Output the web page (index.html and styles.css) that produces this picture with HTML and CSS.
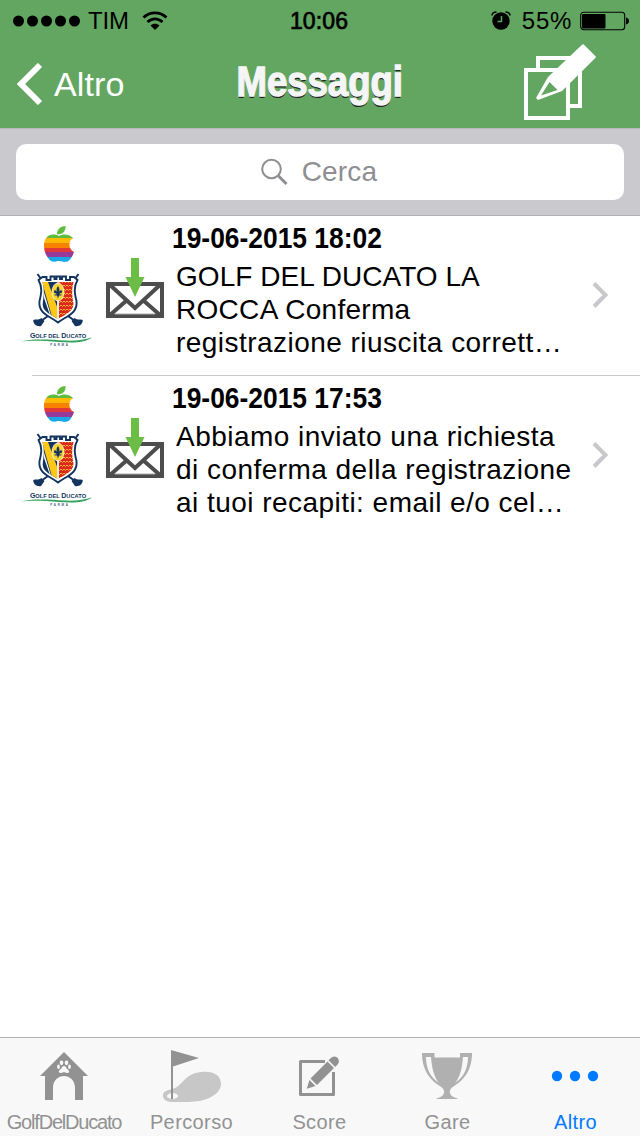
FILE: index.html
```html
<!DOCTYPE html>
<html lang="it">
<head>
    <meta charset="UTF-8">
    <meta name="viewport" content="width=device-width, initial-scale=1.0">
    <title>Messaggi</title>
    <link rel="stylesheet" href="styles.css">
</head>
<body>
    <!-- Shared icons -->
    <svg class="defs" width="0" height="0">
        <defs>
            <clipPath id="appleShape">
                <path d="M41 18.500 C41 14 44 10 49.500 10 C50 15 47 18.500 41 18.500 Z"/>
                <path d="M43 20 C47 17.500 53 18 57 22 C52 25 52 33 58 36 C56 42 53 46 49 46 C46 46 44 44.500 42 45 C39 46 37 46 35 45 C31 42 28 36 28 30 C28 21 34 16 43 20 Z"/>
            </clipPath>
            <clipPath id="shieldShape">
                <path d="M26.500 66 H57.500 C55.500 73 56 80 57.500 88 C57 96 49 98.500 42 103 C35 98.500 27 96 26.500 88 C28 80 28.500 73 26.500 66 Z"/>
            </clipPath>
            <pattern id="scales" width="3" height="4" patternUnits="userSpaceOnUse">
                <rect width="3" height="4" fill="#d9281c"/>
                <path d="M0 1 L1.500 2.500 L3 1" fill="none" stroke="#ffb52c" stroke-width="1"/>
            </pattern>
        </defs>
        <symbol id="club" viewBox="0 0 80 144">
            <g clip-path="url(#appleShape)" shape-rendering="crispEdges">
                <rect x="26" y="9" width="34" height="14" fill="#5ebd3e"/>
                <rect x="26" y="22" width="34" height="6" fill="#ffb900"/>
                <rect x="26" y="27" width="34" height="5" fill="#f78200"/>
                <rect x="26" y="32" width="34" height="4" fill="#e23838"/>
                <rect x="26" y="36" width="34" height="5" fill="#973999"/>
                <rect x="26" y="41" width="34" height="5" fill="#1aa7e8"/>
            </g>
            <path d="M21.500 58 L26.500 65 M62.500 58 L57.500 65 M32 100 L25 105 M52 100 L59 105" fill="none" stroke="#12345f" stroke-width="2"/>
            <path d="M17.300 104 C20 103 22 104.500 25.500 102 L28.500 105 L25 110 C21 111 17 108 17.300 104 Z M66.700 104 C64 103 62 104.500 58.500 102 L55.500 105 L59 110 C63 111 67 108 66.700 104 Z" fill="#12345f"/>
            <path d="M22.500 64 L26.500 61 H30.500 V64 H34.500 V60.500 H38.500 V63 H40.500 V60.500 H44 V63 H46 V60.500 H50 V64 H54 V61 H58 L61.500 64 C57.500 71 58.500 77 60.500 85 C62 98 50 100 42 106.500 C34 100 22 98 23.500 85 C25.500 77 26.500 71 22.500 64 Z" fill="#fff" stroke="#12345f" stroke-width="1.900"/>
            <g clip-path="url(#shieldShape)">
                <rect x="25" y="62" width="16.500" height="44" fill="#12345f"/>
                <path d="M26 70 L36 103 H26 Z" fill="#fff"/>
                <path d="M27 79 L35 102 H27 Z" fill="#12345f"/>
                <path d="M26 66 H32 L41.500 92 V104 H37 Z" fill="#ffc814"/>
                <rect x="42.500" y="66" width="17" height="38" fill="url(#scales)"/>
                <path d="M42 83 V105" stroke="#fff" stroke-width="1.500"/>
            </g>
            <ellipse cx="42" cy="76" rx="6" ry="9" fill="#ffd32d" stroke="#fff" stroke-width=".8"/>
            <path d="M42 70 C39.500 73.500 41 74.500 41.200 76.500 C40.500 73.500 37.500 73.500 38 76 C38.200 77.500 39.500 77.500 40 77 L40.500 78.500 H38.500 V79.500 H41 L42 82.500 L43 79.500 H45.500 V78.500 H43.500 L44 77 C44.500 77.500 45.800 77.500 46 76 C46.500 73.500 43.500 73.500 42.800 76.500 C43 74.500 44.500 73.500 42 70 Z" fill="#12345f"/>
            <path d="M4.500 126 C15 122 36 124 48 124.500 C60 125 68 124 76 121.500 C66 128 54 126.500 43 126 C28 125 14 124 4.500 126 Z" fill="#33a05a"/>
        </symbol>
        <symbol id="inbox" viewBox="0 0 58 60">
            <path d="M2 26 H56 V58 H2 Z" fill="#fff" stroke="#4d4d4d" stroke-width="4"/>
            <path d="M4 57 L20 43 M54 57 L38 43 M3 26 L29 50 L55 26" fill="none" stroke="#4d4d4d" stroke-width="4"/>
            <path d="M9 56 H49" stroke="#aaa" stroke-width="1"/>
            <path d="M25 0 H33 V19 H38.500 L29 39 L19.500 19 H25 Z" fill="#6cbd45"/>
        </symbol>
    </svg>

    <div class="screen">
        <header class="top">
            <div class="status-bar">
                <div class="status-left">
                    <svg width="68" height="12" viewBox="0 0 68 12"><circle cx="5.500" cy="6" r="5.500"/><circle cx="19.500" cy="6" r="5.500"/><circle cx="33.500" cy="6" r="5.500"/><circle cx="47.500" cy="6" r="5.500"/><circle cx="61.500" cy="6" r="5.500"/></svg>
                    <span class="carrier">TIM</span>
                    <svg class="wifi" width="26" height="20" viewBox="0 0 26 20">
                        <path d="M1.500 6.500 C8 .3 18 .3 24.500 6.500 M5.500 11 C10 6.700 16 6.700 20.500 11" fill="none" stroke="#000" stroke-width="2.800"/>
                        <path d="M8.500 14.500 C11 12 15 12 17.500 14.500 L13 19 Z"/>
                    </svg>
                </div>
                <span class="clock">10:06</span>
                <div class="status-right">
                    <svg width="20" height="19" viewBox="0 0 20 19">
                        <circle cx="10" cy="10" r="8.700"/>
                        <path d="M1 4.500 C1 2 3 1 5.500 1 M19 4.500 C19 2 17 1 14.500 1" fill="none" stroke="#000" stroke-width="1.600"/>
                        <path d="M10.500 5 V10.500 H6.500" fill="none" stroke="#62a662" stroke-width="1.500"/>
                    </svg>
                    <span class="percent">55%</span>
                    <svg width="49" height="20" viewBox="0 0 49 20">
                        <rect x=".7" y="1.200" width="44" height="17.600" rx="3" fill="none" stroke="#000" stroke-width="1.100"/>
                        <rect x="2" y="3" width="23.500" height="14.500" rx="1"/>
                        <path d="M46 6.500 C50 7 50 13 46 13.500 Z"/>
                    </svg>
                </div>
            </div>
            <nav class="nav-bar">
                <a class="back">
                    <svg width="26" height="42" viewBox="0 0 26 42"><path d="M23 2 L4 21 L23 40" fill="none" stroke="#fff" stroke-width="6"/></svg>
                    <span>Altro</span>
                </a>
                <h1>Messaggi</h1>
                <svg class="compose" width="73" height="77" viewBox="0 0 73 77">
                    <path d="M14 26 V14 H56 V62 H44" fill="none" stroke="#fff" stroke-width="4"/>
                    <rect x="2" y="26" width="42" height="48" fill="#62a662" stroke="#fff" stroke-width="4"/>
                    <path d="M58 .7 Q59 -.3 60 .7 L71.300 12 Q72.300 13 71.300 14 L38 47 L14 56 L12 54 L24 33 Z" fill="#fff"/>
                    <path d="M25.500 38 L33.500 46 L17 51.500 Z" fill="#62a662"/>
                </svg>
            </nav>
        </header>

        <div class="search-bar">
            <div class="search-field">
                <svg width="27" height="28" viewBox="0 0 27 28"><circle cx="10.500" cy="11" r="9.300" fill="none" stroke="#8e8e93" stroke-width="2"/><path d="M17 17.500 L25.500 26" stroke="#8e8e93" stroke-width="3"/></svg>
                <span>Cerca</span>
            </div>
        </div>

        <main class="messages">
            <article class="message">
                <div class="club-logo">
                    <svg width="80" height="144"><use href="#club"/></svg>
                    <span class="club-name">G<small>OLF DEL </small>D<small>UCATO</small></span>
                    <span class="club-city">PARMA</span>
                </div>
                <svg class="inbox-icon"><use href="#inbox"/></svg>
                <div class="message-body">
                    <h2>19-06-2015 18:02</h2>
                    <p><span class="caps">GOLF DEL DUCATO LA</span><span class="mixed">ROCCA Conferma</span><span>registrazione riuscita corrett…</span></p>
                </div>
                <svg class="chevron" width="16" height="26" viewBox="0 0 16 26"><path d="M2 1.500 L13.500 13 L2 24.500" fill="none" stroke="#c7c7cc" stroke-width="4"/></svg>
            </article>
            <article class="message">
                <div class="club-logo">
                    <svg width="80" height="144"><use href="#club"/></svg>
                    <span class="club-name">G<small>OLF DEL </small>D<small>UCATO</small></span>
                    <span class="club-city">PARMA</span>
                </div>
                <svg class="inbox-icon"><use href="#inbox"/></svg>
                <div class="message-body">
                    <h2>19-06-2015 17:53</h2>
                    <p><span>Abbiamo inviato una richiesta</span><span>di conferma della registrazione</span><span>ai tuoi recapiti: email e/o cel…</span></p>
                </div>
                <svg class="chevron" width="16" height="26" viewBox="0 0 16 26"><path d="M2 1.500 L13.500 13 L2 24.500" fill="none" stroke="#c7c7cc" stroke-width="4"/></svg>
            </article>
        </main>

        <footer class="tab-bar">
            <a class="tab">
                <svg width="64" height="64" viewBox="0 0 64 64">
                    <path d="M32 14 L56 38 H51 V62 H43 V50 C43 34 21 34 21 50 V62 H13 V38 H8 Z" fill="#929292"/>
                    <g fill="#f8f8f8">
                        <ellipse cx="29.500" cy="24.800" rx="1.800" ry="2.400"/><ellipse cx="34.500" cy="24.800" rx="1.800" ry="2.400"/>
                        <ellipse cx="26.500" cy="28.800" rx="1.400" ry="2.200"/><ellipse cx="37.500" cy="28.800" rx="1.400" ry="2.200"/>
                        <path d="M30 29 Q32 27 34 29 C34 31 38 32 37 34.500 Q35 35.500 32 34 Q29 35.500 27 34.500 C26 32 30 31 30 29 Z"/>
                    </g>
                </svg>
                <span class="tight">GolfDelDucato</span>
            </a>
            <a class="tab">
                <svg width="64" height="64" viewBox="0 0 64 64">
                    <path d="M3 57 C4 51 10 53 17 49 C24 44 27 35 42 34 C54 33 61 38 61 46 C61 56 46 64 31 63.700 C18 65 2 66 3 57 Z" fill="#c7c7c7"/>
                    <ellipse cx="12.500" cy="58" rx="5.500" ry="3" fill="#f8f8f8"/>
                    <path d="M11 12 L39 20 L13 28.500 V61 H11 Z" fill="#929292"/>
                </svg>
                <span>Percorso</span>
            </a>
            <a class="tab">
                <svg width="64" height="64" viewBox="0 0 64 64">
                    <path d="M37 23.500 H12.500 V56.500 H45.500 V34" fill="none" stroke="#929292" stroke-width="3" stroke-linejoin="round"/>
                    <path d="M18.700 50.700 L21.500 42 L27.500 48 Z M22.500 40.500 L39.500 23.500 L46 30 L29 47 Z M40.500 22.300 L43.500 19.500 C48 16 53 21.500 50 26 L47.200 29 Z" fill="#929292"/>
                </svg>
                <span>Score</span>
            </a>
            <a class="tab">
                <svg width="64" height="64" viewBox="1 0 64 64">
                    <path d="M7 15 H19.500 V19.500 H45 V15 H57 C57 34 47 43 40 47.500 C34 51 34 54 36 57 C38 60 41 59 43 61 H21 C23 59 26 60 28 57 C30 54 30 51 24 47.500 C17 43 7 34 7 15 Z" fill="#b0b0b0"/>
                    <path d="M11 19 H16 C17 31 19 39 24 45 C15 39 11 30 11 19 Z M53 19 H48 C47 31 45 39 40 45 C49 39 53 30 53 19 Z" fill="#f8f8f8"/>
                </svg>
                <span>Gare</span>
            </a>
            <a class="tab active">
                <svg width="64" height="64" viewBox="1 0 64 64"><circle cx="14" cy="38" r="5.200"/><circle cx="32" cy="38" r="5.200"/><circle cx="50" cy="38" r="5.200"/></svg>
                <span>Altro</span>
            </a>
        </footer>
    </div>
</body>
</html>
```
FILE: styles.css
```css
* {
    box-sizing: border-box;
}

body {
    margin: 0;
    font-family: "Liberation Sans", Arial, sans-serif;
    background-color: #fff;
    color: #000;
}

svg {
    display: block;
    flex-shrink: 0;
}

.defs {
    position: absolute;
}

.screen {
    display: flex;
    flex-direction: column;
    width: 640px;
    height: 1136px;
    overflow: hidden;
}

.top {
    height: 128px;
    background-color: #62a662;
}

.status-bar {
    display: grid;
    grid-template-columns: 1fr auto 1fr;
    align-items: center;
    height: 40px;
    padding: 1px 11px 0 13px;
    font-size: 24px;
}

.status-left,
.status-right {
    display: flex;
    align-items: center;
}

.status-right {
    justify-content: flex-end;
}

.carrier {
    margin: 0 13px 0 7px;
    letter-spacing: -0.2px;
}

.clock {
    margin-right: 4px;
    padding-top: 1px;
    font-size: 23px;
    letter-spacing: 0.1px;
    -webkit-text-stroke: 0.7px #000;
}

.percent {
    margin: 0 8px 0 11px;
    letter-spacing: 0.7px;
}

.nav-bar {
    display: grid;
    grid-template-columns: 1fr auto 1fr;
    align-items: start;
    height: 88px;
    padding: 0 43px 0 17px;
}

.back {
    display: flex;
    align-items: center;
    gap: 11px;
    padding-top: 23px;
    color: #fff;
    font-size: 34px;
    letter-spacing: 0.1px;
}

h1 {
    margin: 17px 0 0 26px;
    font-size: 42px;
    line-height: 50px;
    color: #f5f5f5;
    text-shadow: 0 2px 0 #222;
    -webkit-text-stroke: 1.4px #f5f5f5;
    transform: scaleX(0.87);
}

.compose {
    justify-self: end;
    margin-top: 4px;
}

.search-bar {
    height: 88px;
    padding: 15px 16px 16px;
    background-color: #c9c9ce;
    border-top: 1px solid #b9b9bc;
    border-bottom: 1px solid #b2b2b6;
}

.search-field {
    display: flex;
    justify-content: center;
    align-items: center;
    gap: 14px;
    height: 56px;
    padding-right: 2px;
    background-color: #fff;
    border-radius: 10px;
    color: #8e8e93;
    font-size: 28px;
    letter-spacing: 0.2px;
}

.messages {
    flex: 1;
}

.message {
    display: flex;
    align-items: flex-start;
    height: 160px;
    padding-left: 16px;
    background: linear-gradient(#c8c7cc, #c8c7cc) 32px 159px / 608px 1px no-repeat;
}

.message:last-child {
    background: none;
}

.club-logo {
    position: relative;
    width: 80px;
    height: 144px;
}

/* club wordmark and city sit over the drawn logo */
.club-name,
.club-city {
    position: absolute;
    left: 0;
    width: 84px;
    text-align: center;
    white-space: nowrap;
    font-weight: bold;
}

.club-name {
    top: 115px;
    font-size: 6.6px;
    line-height: 9px;
    color: #12345f;
    transform: scaleX(1.06);
}

.club-name small {
    font-size: 5.4px;
}

.club-city {
    top: 127px;
    left: 2px;
    font-size: 3px;
    line-height: 5px;
    letter-spacing: 1.7px;
    color: #4a6285;
}

.inbox-icon {
    width: 58px;
    height: 60px;
    margin: 42px 8px 0 10px;
}

.message-body {
    width: 420px;
}

h2 {
    margin: 6px 0 0;
    font-size: 29px;
    line-height: 32px;
    white-space: nowrap;
    transform: scaleX(0.91);
    transform-origin: left;
}

p {
    margin: 6px 0 0 4px;
    font-size: 28px;
    line-height: 33px;
    letter-spacing: 0.46px;
}

p span {
    display: block;
    white-space: nowrap;
}

p .caps {
    letter-spacing: 0.05px;
}

p .mixed {
    letter-spacing: 0.3px;
}

.chevron {
    margin-top: 66px;
}

.tab-bar {
    display: flex;
    height: 99px;
    background-color: #f8f8f8;
    border-top: 1px solid #b2b2b2;
}

.tab {
    display: flex;
    flex-direction: column;
    align-items: center;
    width: 128px;
    color: #929292;
    font-size: 20px;
    line-height: 24px;
    letter-spacing: 0.4px;
}

.tab span {
    margin: 8px 1px 0 0;
}

.tab .tight {
    margin-right: 0;
    letter-spacing: -1.2px;
}

.active {
    color: #007aff;
    fill: #007aff;
}
```
